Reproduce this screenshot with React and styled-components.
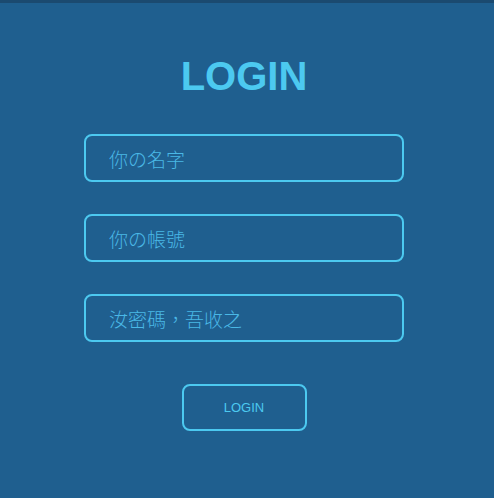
import React from "react";
import styled, { createGlobalStyle } from "styled-components";

const Global = createGlobalStyle`
  html, body { margin: 0; padding: 0; background: #1f5f8f; }
  body { font-family: "Liberation Sans", Arial, "Noto Sans CJK TC", sans-serif; }
`;

const Page = styled.div`
  width: 494px;
  height: 498px;
  box-sizing: border-box;
  padding-right: 6px;
  background: #1f5f8f;
  border-top: 3px solid #1b4a70;
  display: flex;
  flex-direction: column;
  align-items: center;
`;

const Title = styled.h1`
  margin: 49px 0 0;
  font-size: 40px;
  line-height: 48px;
  font-weight: 700;
  color: #4cc9f0;
`;

const Form = styled.form`
  margin-top: 34px;
  display: flex;
  flex-direction: column;
  align-items: center;
  gap: 32px;
`;

const Field = styled.input`
  width: 320px;
  height: 48px;
  box-sizing: border-box;
  background: transparent;
  border: 2px solid #4cc9f0;
  border-radius: 8px;
  padding: 5px 0 0 23px;
  font-family: "Liberation Sans", Arial, "Noto Sans CJK TC", sans-serif;
  font-size: 19px;
  font-weight: 300;
  color: #4cc9f0;
  outline: none;
  &::placeholder { color: #4ab8e6; opacity: 1; }
`;

const Button = styled.button`
  margin-top: 10px;
  width: 125px;
  height: 47px;
  box-sizing: border-box;
  background: transparent;
  border: 2px solid #4cc9f0;
  border-radius: 8px;
  color: #4cc9f0;
  font-family: "Liberation Sans", Arial, sans-serif;
  font-size: 13px;
  cursor: pointer;
`;

export default function App() {
  return (
    <>
      <Global />
      <Page>
        <Title>LOGIN</Title>
        <Form onSubmit={(e) => e.preventDefault()}>
          <Field placeholder="你の名字" />
          <Field placeholder="你の帳號" />
          <Field type="password" placeholder="汝密碼，吾收之" />
          <Button type="submit">LOGIN</Button>
        </Form>
      </Page>
    </>
  );
}
